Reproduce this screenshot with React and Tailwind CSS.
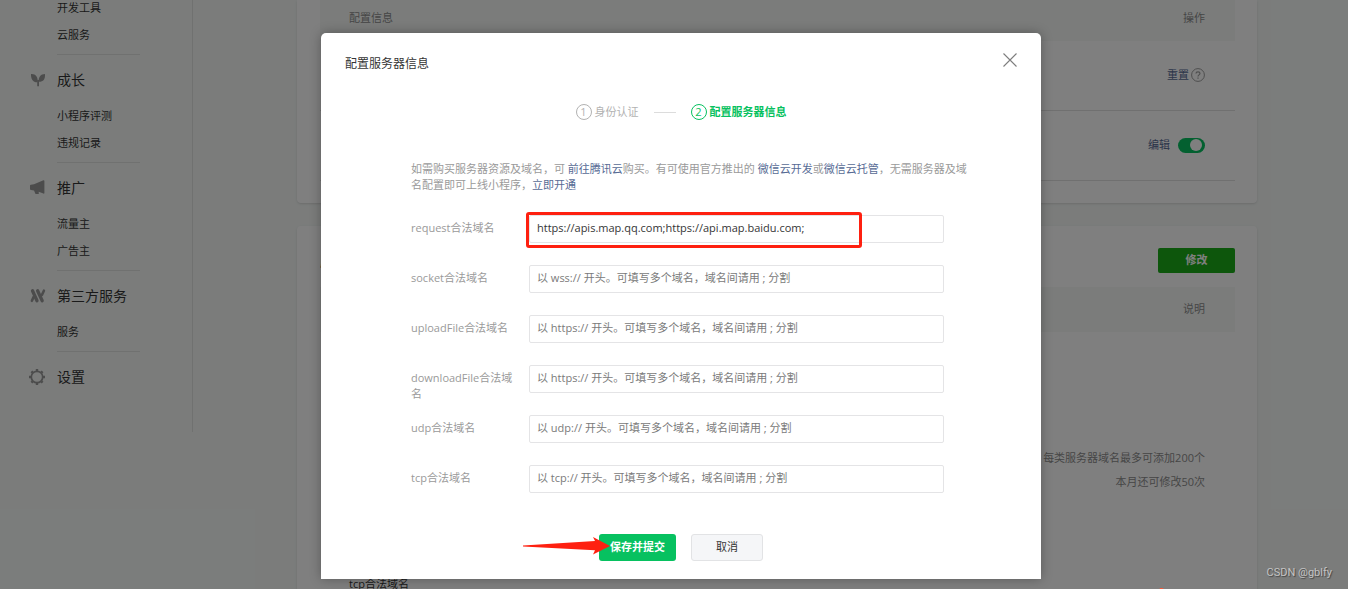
import React from "react";

const NAV = [
  { items: ["开发工具", "云服务"] },
  { title: "成长", icon: SproutIcon, items: ["小程序评测", "违规记录"] },
  { title: "推广", icon: HornIcon, items: ["流量主", "广告主"] },
  { title: "第三方服务", icon: PartnerIcon, items: ["服务"] },
  { title: "设置", icon: GearIcon, items: [] },
];

const FIELDS = [
  { id: "request", value: "https://apis.map.qq.com;https://api.map.baidu.com;", scheme: "https", marked: true },
  { id: "socket", scheme: "wss" },
  { id: "uploadFile", scheme: "https" },
  { id: "downloadFile", scheme: "https" },
  { id: "udp", scheme: "udp" },
  { id: "tcp", scheme: "tcp" },
];

function SproutIcon() {
  return (
    <svg width="18" height="18" viewBox="0 0 18 18" fill="currentColor" aria-hidden="true">
      <path d="M2 3C6.500 2.600 9 5.500 8.700 11.300 4 11.600 1.700 8 2 3z" />
      <path d="M16 3c.4 5.500-2 8-6.300 7.800C9.200 6.500 11.500 3 16 3z" />
      <path d="M8.200 9h1.800v6.200H8.200z" />
    </svg>
  );
}

function HornIcon() {
  return (
    <svg width="18" height="18" viewBox="0 0 18 18" fill="currentColor" aria-hidden="true">
      <path d="M1 6.800Q1 6 1.800 5.800L5 5.200 14.400 1.200Q15.400 1 15.400 2v12q0 .900-1 .600L9.700 12.700l.1 2.200H6.500L5 11.500l-3-.400Q1 11 1 10z" />
    </svg>
  );
}

function PartnerIcon() {
  return (
    <svg width="18" height="18" viewBox="0 0 18 18" fill="none" stroke="currentColor" aria-hidden="true">
      <path d="M3.500 3.700 8 13.700M8.600 3.700l4.600 10" strokeWidth="3.300" strokeLinecap="round" />
      <path d="M14.900 3.700 12.900 8M4.700 9.800l-1.800 4" strokeWidth="2.600" strokeLinecap="round" />
    </svg>
  );
}

function GearIcon() {
  return (
    <svg width="18" height="18" viewBox="0 0 18 18" fill="none" stroke="currentColor" aria-hidden="true">
      <circle cx="8" cy="9" r="5.700" strokeWidth="1.700" />
      <path
        d="M8 1v2M8 15v2M0 9h2M14 9h2M2.400 3.400l1.300 1.300M12.300 13.300l1.300 1.300M13.600 3.400l-1.300 1.300M3.700 13.300l-1.300 1.300"
        strokeWidth="2.400"
      />
    </svg>
  );
}

function Sidebar() {
  return (
    <nav className="-mt-[6px] w-[193px] shrink-0 self-start border-r border-[#e0e2e1] pb-[42px] pl-[29px]">
      {NAV.map(({ title, icon: Icon, items }, i) => (
        <section key={i} className={title ? "pt-[11px]" : ""}>
          {title && (
            <h2 className="flex h-[27px] items-center gap-[10px] text-[14px] text-[#353535]">
              <span className="text-[#999999]">
                <Icon />
              </span>
              {title}
            </h2>
          )}
          {items.length > 0 && (
            <ul className={`ml-[28px] w-[83px] border-b border-[#e0e2e1] pb-[6px] ${title ? "mt-[9px]" : ""}`}>
              {items.map((item) => (
                <li key={item} className="h-[27px] leading-[27px]">
                  <a href="#" className="text-[#353535]">{item}</a>
                </li>
              ))}
            </ul>
          )}
        </section>
      ))}
    </nav>
  );
}

function SettingsCards() {
  return (
    <main className="mr-[91px] ml-[104px] flex flex-1 flex-col gap-[23px]">
      <section className="rounded-b bg-white pr-[22px] pb-[22px] pl-[23px] shadow-sm">
        <table className="w-full">
          <thead>
            <tr className="h-[41px] bg-[#f6f9f7] text-[#8d8d8d]">
              <th className="pb-1 pl-[29px] text-left font-normal">配置信息</th>
              <th className="pr-[30px] pb-1 text-right font-normal">操作</th>
            </tr>
          </thead>
          <tbody>
            <tr className="h-[69px] border-b border-[#e0e0e0]">
              <td />
              <td className="pr-[30px]">
                <div className="flex items-center justify-end gap-[2px]">
                  <a href="#" className="text-[#576b95]">重置</a>
                  <svg width="14" height="14" viewBox="0 0 14 14" fill="none" stroke="#9c9c9c" aria-hidden="true">
                    <circle cx="7" cy="7" r="6.400" />
                    <path d="M5 5.600C5 3.400 9 3.400 9 5.600 9 6.800 7 7 7 8.500M7 9.500v1.200" strokeWidth="1.200" />
                  </svg>
                </div>
              </td>
            </tr>
            <tr className="h-[70px] border-b border-[#e0e0e0]">
              <td />
              <td className="pr-[30px]">
                <div className="flex items-center justify-end gap-2">
                  <a href="#" className="text-[#576b95]">编辑</a>
                  <button
                    type="button"
                    role="switch"
                    aria-checked="true"
                    aria-label="编辑"
                    className="flex h-[15px] w-[27px] items-center justify-end rounded-full bg-[#07c160] pr-[3px]"
                  >
                    <span className="size-3 rounded-full bg-white" />
                  </button>
                </div>
              </td>
            </tr>
          </tbody>
        </table>
      </section>

      <section className="rounded-t bg-white pt-[22px] pr-[22px] pl-[23px] shadow-sm">
        <div className="flex items-center justify-between">
          <h2 className="text-[14px] text-[#353535]">服务器域名</h2>
          <button type="button" className="h-[25px] w-[77px] rounded-[2px] bg-[#1aad19] font-bold text-white">
            修改
          </button>
        </div>
        <table className="mt-[14px] w-full">
          <thead>
            <tr className="h-[45px] bg-[#f6f9f7] text-[#8d8d8d]">
              <th />
              <th className="pr-[30px] text-right font-normal">说明</th>
            </tr>
          </thead>
          <tbody>
            <tr className="h-[230px]">
              <td />
              <td rowSpan={2} className="pr-[30px] text-right leading-6 text-[#8d8d8d]">
                <p>每类服务器域名最多可添加200个</p>
                <p>本月还可修改50次</p>
              </td>
            </tr>
            <tr className="h-[46px]">
              <td className="pl-[29px] text-[#353535]">tcp合法域名</td>
            </tr>
          </tbody>
        </table>
      </section>
    </main>
  );
}

function Step({ number, label, active }) {
  return (
    <li className={`flex items-center gap-[3px] ${active ? "font-bold text-[#07c160]" : "text-[#b2b2b2]"}`}>
      <span className="flex size-4 items-center justify-center rounded-full border border-current font-normal">
        {number}
      </span>
      {label}
    </li>
  );
}

function Field({ id, value, scheme, marked }) {
  return (
    <div className="flex min-h-[50px] items-start gap-3">
      <label htmlFor={id} className="w-[106px] shrink-0 pt-[5px] leading-4 break-all text-[#9a9a9a]">
        {id}合法域名
      </label>
      <div className="relative flex-1">
        <input
          id={id}
          type="text"
          defaultValue={value}
          placeholder={`以 ${scheme}:// 开头。可填写多个域名，域名间请用 ; 分割`}
          className="block h-7 w-full rounded-[2px] border border-[#e4e4e6] bg-white px-[7px] pb-1 text-[#353535] outline-none placeholder:text-[#7a7a7a]"
        />
        {marked && (
          <span className="pointer-events-none absolute -top-[3px] -left-[3px] h-9 w-[336px] rounded-[3px] border-3 border-[#fe2010]" />
        )}
      </div>
    </div>
  );
}

function ServerDialog() {
  return (
    <div
      role="dialog"
      aria-labelledby="dialog-title"
      className="w-[720px] rounded-t-[5px] bg-white shadow-[0_0_12px_rgba(0,0,0,0.3)]"
    >
      <header className="flex h-[62px] items-center justify-between px-6">
        <h1 id="dialog-title" className="text-[12px] text-[#353535]">配置服务器信息</h1>
        <button type="button" aria-label="关闭" className="mb-2 text-[#7d7d7d]">
          <svg width="14" height="14" viewBox="0 0 14 14" fill="none" stroke="currentColor" strokeWidth="1.100">
            <path d="M.5.500l13 13M13.500.500l-13 13" />
          </svg>
        </button>
      </header>

      <ol className="flex h-[34px] items-center justify-center gap-[15px]">
        <Step number="1" label="身份认证" />
        <li aria-hidden="true" className="h-px w-[22px] bg-[#dcdcdc]" />
        <Step number="2" label="配置服务器信息" active />
      </ol>

      <form className="pr-[97px] pb-[18px] pl-[90px]" onSubmit={(e) => e.preventDefault()}>
        <p className="-mr-8 mt-8 leading-4 text-[#9a9a9a]">
          如需购买服务器资源及域名，可 <a href="#" className="text-[#576b95]">前往腾讯云</a>购买。有可使用官方推出的{" "}
          <a href="#" className="text-[#576b95]">微信云开发</a>或<a href="#" className="text-[#576b95]">微信云托管</a>
          ，无需服务器及域
          <br />
          名配置即可上线小程序，<a href="#" className="text-[#576b95]">立即开通</a>
        </p>

        <div className="mt-[22px]">
          {FIELDS.map((field) => (
            <Field key={field.id} {...field} />
          ))}
        </div>

        <div className="mt-[19px] flex justify-center gap-[15px] pl-[7px]">
          <div className="relative">
            <button type="submit" className="h-[27px] w-[77px] rounded-[3px] bg-[#07c160] font-bold text-white">
              保存并提交
            </button>
            <svg
              width="88"
              height="18"
              viewBox="0 0 88 18"
              fill="#fe2010"
              className="pointer-events-none absolute top-[3px] -left-[76px]"
              aria-hidden="true"
            >
              <path d="M0 8.500 72 4 70 0l17 9-17 8.500 2-4.200L0 9.600z" />
            </svg>
          </div>
          <button type="button" className="h-[27px] w-[72px] rounded-[3px] border border-[#e2e3e5] bg-[#f5f6f8] text-[#353535]">
            取消
          </button>
        </div>
      </form>
    </div>
  );
}

export default function App() {
  return (
    <div className="relative h-screen overflow-hidden bg-[#f6f9f7] font-['Open_Sans','Noto_Sans_CJK_SC',sans-serif] text-[11px]">
      <div className="flex">
        <Sidebar />
        <SettingsCards />
      </div>
      <div className="absolute inset-0 flex items-start justify-center bg-black/50 pt-[33px] pl-[14px]">
        <ServerDialog />
      </div>
      <span className="absolute -bottom-1 left-[1159px] size-[5px] rounded-full bg-[#fc5531]" aria-hidden="true" />
      <span className="absolute right-4 bottom-2 font-['Roboto',sans-serif] text-[11px] text-[#c4c4c4] [text-shadow:1px_1px_1px_#444]">
        CSDN @gblfy
      </span>
    </div>
  );
}
